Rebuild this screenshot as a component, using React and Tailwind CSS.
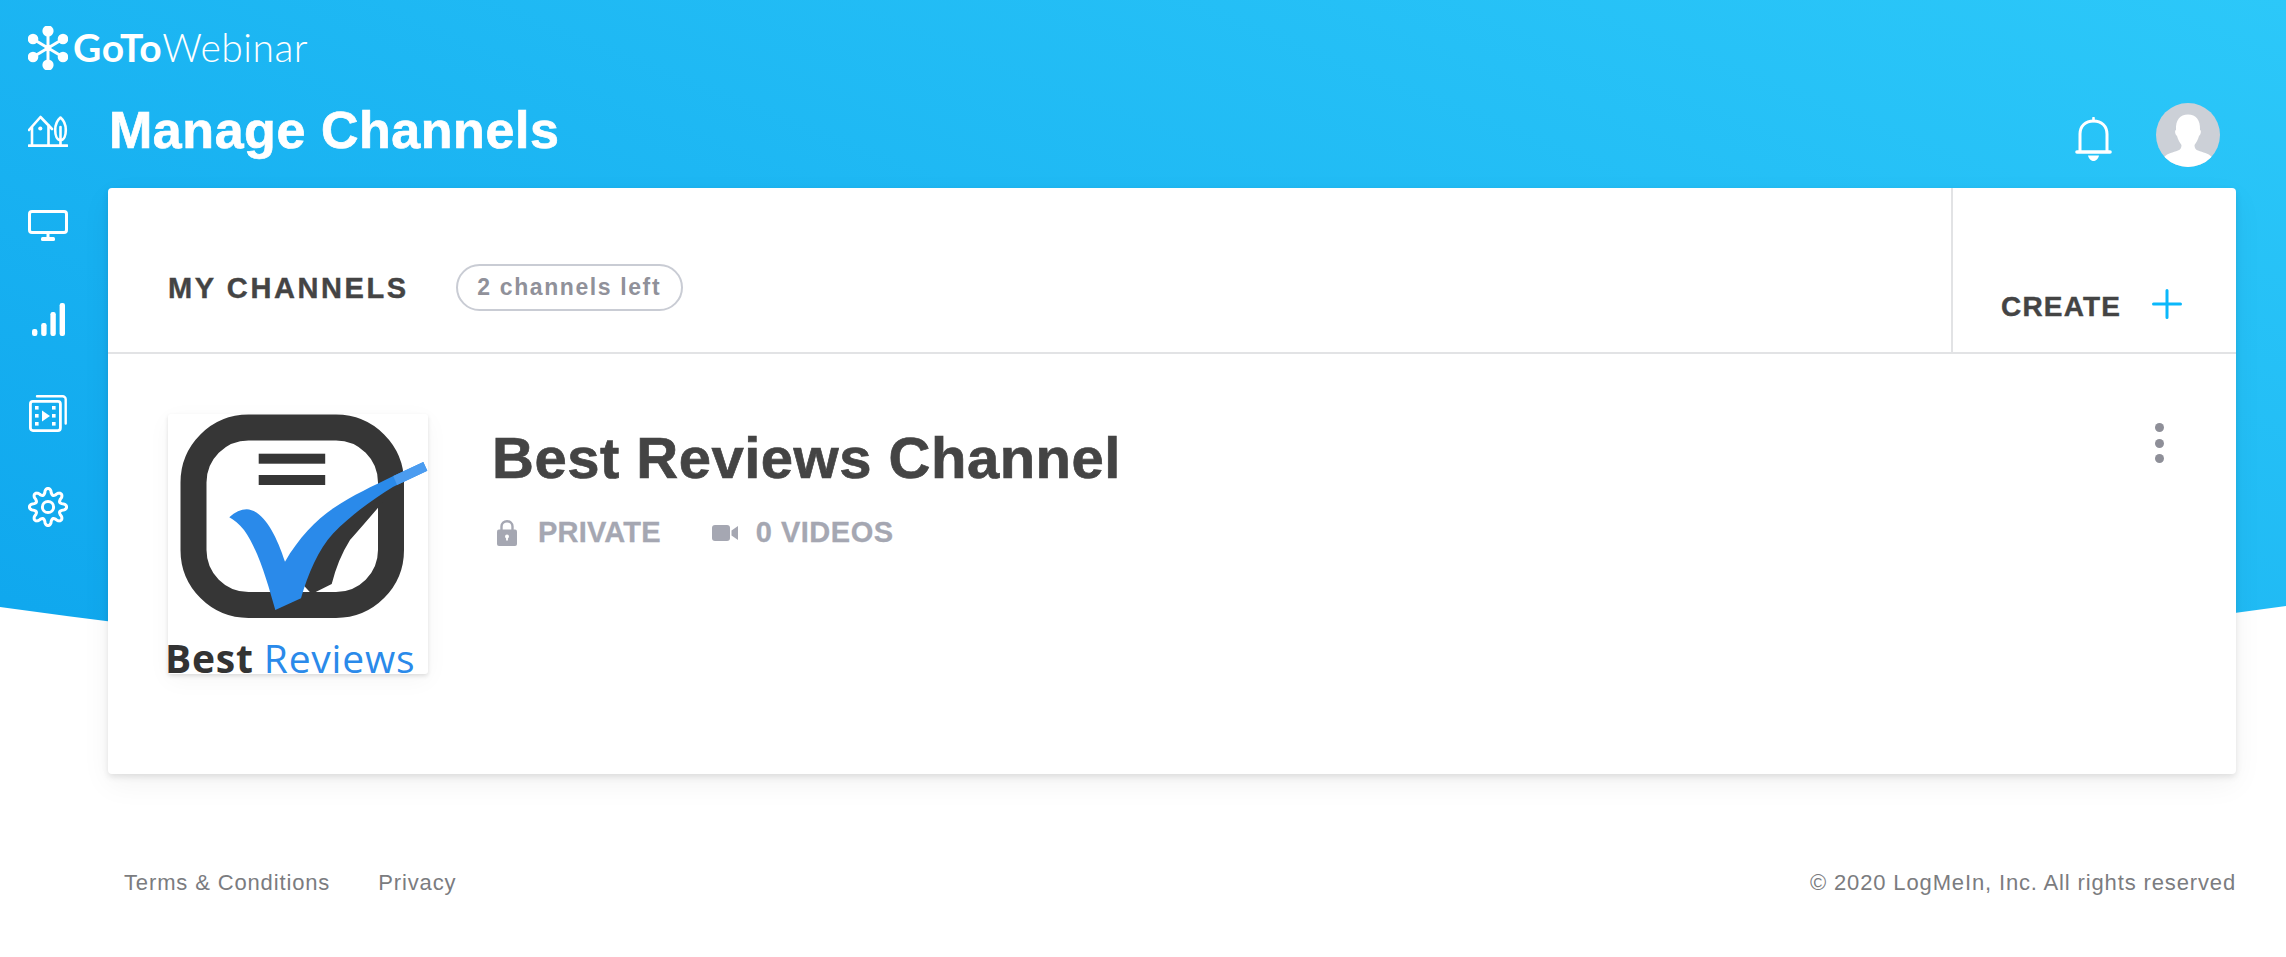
import React from "react";

function Background() {
  return (
    <svg className="absolute left-0 top-0" width="2286" height="957" viewBox="0 0 2286 957">
      <defs>
        <linearGradient id="bg" gradientUnits="userSpaceOnUse" x1="0" y1="600" x2="511" y2="-700">
          <stop offset="0" stopColor="#10a8ee" />
          <stop offset="1" stopColor="#2cc8f9" />
        </linearGradient>
      </defs>
      <path d="M0 0H2286V606Q1143 766 0 607Z" fill="url(#bg)" />
    </svg>
  );
}

function Flower() {
  const nodes = [[0, -17], [0, 17], [-15, -9], [15, -9], [-15, 9], [15, 9]];
  return (
    <svg width="40" height="44" viewBox="-20 -22 40 44" className="shrink-0">
      {nodes.map(([x, y], i) => (
        <g key={i}>
          <line x1="0" y1="0" x2={x} y2={y} stroke="#fff" strokeWidth="3" />
          <circle cx={x} cy={y} r={i < 2 ? 5.6 : 5.3} fill="#fff" />
        </g>
      ))}
      <circle cx="0" cy="0" r="3.2" fill="#fff" />
    </svg>
  );
}

function HomeIcon() {
  return (
    <svg width="40" height="32" viewBox="0 0 40 32" fill="none" stroke="#fff" strokeWidth="2.6" strokeLinecap="round" strokeLinejoin="round">
      <path d="M1 15 12.5 2 24 14" />
      <path d="M4 12.5V30.5M20.5 10.5V30.5" />
      <path d="M1 30.6H39" strokeWidth="2.8" />
      <circle cx="12.3" cy="13.5" r="2.1" fill="#fff" stroke="none" />
      <path d="M32.5 2.5C29 5.5 27.2 10 27.2 15C27.2 20.5 29 25 32.5 25C36 25 37.8 20.5 37.8 15C37.8 10 36 5.5 32.5 2.5Z" />
      <path d="M32.5 12V30.5" />
    </svg>
  );
}

function MonitorIcon() {
  return (
    <svg width="40" height="31" viewBox="0 0 40 31" fill="none">
      <rect x="1.5" y="1.5" width="37" height="21" rx="2.5" stroke="#fff" strokeWidth="3" />
      <path d="M18.5 23H21.5V27H18.5Z" fill="#fff" />
      <rect x="13" y="27" width="14" height="4" rx="1.5" fill="#fff" />
    </svg>
  );
}

function BarsIcon() {
  return (
    <svg width="33" height="33" viewBox="0 0 33 33" fill="#fff">
      <rect x="0" y="26" width="5.4" height="7" rx="2.2" />
      <rect x="9.2" y="20" width="5.4" height="13" rx="2.2" />
      <rect x="18.4" y="9" width="5.4" height="24" rx="2.2" />
      <rect x="27.6" y="0" width="5.4" height="33" rx="2.2" />
    </svg>
  );
}

function FilmIcon() {
  return (
    <svg width="38" height="37" viewBox="0 0 38 37" fill="none">
      <rect x="1.4" y="6.4" width="30" height="29.2" rx="2.5" stroke="#fff" strokeWidth="2.8" />
      <path d="M8 1.3H33.5A3 3 0 0 1 36.7 4.2V28.5" stroke="#fff" strokeWidth="2.4" strokeLinecap="round" />
      <g fill="#fff">
        <rect x="6" y="11" width="3.6" height="3.6" />
        <rect x="6" y="19" width="3.6" height="3.6" />
        <rect x="6" y="27" width="3.6" height="3.6" />
        <rect x="23" y="11" width="3.6" height="3.6" />
        <rect x="23" y="19" width="3.6" height="3.6" />
        <rect x="23" y="27" width="3.6" height="3.6" />
        <path d="M13 15.5 21 21 13 26.5Z" />
      </g>
    </svg>
  );
}

function gearPath() {
  const pts = [];
  for (let i = 0; i < 240; i++) {
    const t = (i / 240) * Math.PI * 2;
    const c = Math.cos(8 * t);
    const s = Math.sign(c) * Math.pow(Math.abs(c), 0.7);
    const r = 15.6 + 3 * s;
    pts.push(`${(20 + r * Math.sin(t)).toFixed(2)} ${(20 - r * Math.cos(t)).toFixed(2)}`);
  }
  return "M" + pts.join("L") + "Z";
}

function GearIcon() {
  return (
    <svg width="40" height="40" viewBox="0 0 40 40" fill="none" stroke="#fff" strokeWidth="3" strokeLinejoin="round">
      <path d={gearPath()} />
      <circle cx="20" cy="20" r="5.6" />
    </svg>
  );
}

function BellIcon() {
  return (
    <svg width="37" height="44" viewBox="0 0 37 44" fill="none" stroke="#fff" strokeLinecap="round" className="mt-[14px]">
      <path d="M5 34V17C5 9 10.5 4 18.5 4C26.5 4 32 9 32 17V34" strokeWidth="3" />
      <path d="M2 35H35" strokeWidth="3.6" />
      <path d="M18.5 1V4" strokeWidth="2.6" />
      <path d="M13 38.5H24C23 42.5 20.5 44 18.5 44C16.5 44 14 42.5 13 38.5Z" fill="#fff" stroke="none" />
    </svg>
  );
}

function Avatar() {
  return (
    <svg width="64" height="64" viewBox="0 0 64 64" className="rounded-full shrink-0">
      <rect width="64" height="64" fill="#ccd0d7" />
      <path d="M20 27C19.5 17 24 11.5 32 11.5C40 11.5 44.5 17 44 27C45.5 27 45 31.5 43 33C42 37 40 40 38.5 42C38.5 45 39.5 46.5 42 47.5C47 49.5 52 50 56 54V64H8V54C12 50 17 49.5 22 47.5C24.5 46.5 25.5 45 25.5 42C24 40 22 37 21 33C19 31.5 18.5 27 20 27Z" fill="#fff" />
    </svg>
  );
}

function LockIcon() {
  return (
    <svg width="20" height="26" viewBox="0 0 20 26">
      <path d="M4.5 10V6.5C4.5 3.2 7 1.2 10 1.2C13 1.2 15.5 3.2 15.5 6.5V10" fill="none" stroke="#a5a7b2" strokeWidth="2.4" />
      <rect x="0" y="9.5" width="20" height="16.5" rx="2" fill="#a5a7b2" />
      <circle cx="10" cy="16.5" r="2" fill="#fff" />
      <rect x="9.1" y="16.5" width="1.8" height="4" fill="#fff" />
    </svg>
  );
}

function CameraIcon() {
  return (
    <svg width="26" height="16" viewBox="0 0 26 16" fill="#a5a7b2" className="block">
      <rect x="0" y="0" width="18" height="16" rx="3" />
      <path d="M19.5 5.5 26 1V15L19.5 10.5Z" />
    </svg>
  );
}

function Thumbnail() {
  return (
    <div className="flex h-[260px] w-[260px] shrink-0 flex-col rounded-[3px] bg-white shadow-[0_2px_4px_rgba(0,0,0,0.12),0_6px_24px_rgba(0,0,0,0.04)]">
      <svg width="260" height="205" viewBox="0 0 260 205" className="block shrink-0">
        <rect x="25.5" y="13.5" width="197.5" height="177.5" rx="55" fill="none" stroke="#363636" strokeWidth="26" />
        <rect x="90.7" y="39.7" width="66.5" height="10" fill="#363636" />
        <rect x="90.7" y="61" width="66.5" height="10" fill="#363636" />
        <path d="M237 62 Q205 100 182 126 Q170 145 163.7 170 L143.7 180 L125 160 L180 90 Z" fill="#363636" />
        <path d="M61.3 103.3 C67 98 73 95.3 78.7 95.3 C95 96 108 120 117 147.7 C130 125 148 106 165.3 94.3 C185 81 205 72 225.3 62 L255.3 48 L259.3 56.7 L225.3 72.7 C205 85 183 101 165.3 119.3 C150 136 140 160 133 184.3 L107.3 196 C100 170 90 135 76 116 C71 110 66 106 61.3 103.3 Z" fill="#2a8aea" />
        <path d="M225.3 62 L255.3 48 L259.3 56.7 L229 71 Z" fill="#4b9cf0" />
      </svg>
      <div className="ml-[-3px] mt-[22.5px] flex font-['Open_Sans',sans-serif] text-[39px] leading-[32px] tracking-[0.8px]">
        <span className="font-bold text-[#333333]">Best</span>
        <span className="ml-[10px] text-[#2a8aea]">Reviews</span>
      </div>
    </div>
  );
}

function NavSlot({ children }) {
  return <div className="flex h-[94px] items-center justify-center">{children}</div>;
}

export default function App() {
  return (
    <div className="relative h-[957px] w-full overflow-hidden bg-white font-['Liberation_Sans',Arial,sans-serif]">
      <Background />
      <div className="relative flex flex-col">
        <div className="flex h-[84px] items-start pl-[28px] pt-[26px] text-white">
          <Flower />
          <div className="ml-[5px] mt-[-1px] flex items-baseline font-['Lato',sans-serif] text-[39px] leading-[44px]">
            <span className="font-bold tracking-[0.6px]">GoTo</span>
            <span className="font-light tracking-[0.5px]">Webinar</span>
          </div>
        </div>
        <div className="flex">
          <nav className="w-[108px] shrink-0 pl-[8px] pr-[20px]">
            <NavSlot><HomeIcon /></NavSlot>
            <NavSlot><MonitorIcon /></NavSlot>
            <NavSlot><BarsIcon /></NavSlot>
            <NavSlot><FilmIcon /></NavSlot>
            <NavSlot><GearIcon /></NavSlot>
          </nav>
          <main className="w-[2128px] shrink-0">
            <div className="flex h-[104px] items-start justify-between pr-[16px]">
              <h1 className="ml-[1px] mt-[16px] text-[52px] font-bold leading-[60px] tracking-[0.55px] text-white [-webkit-text-stroke:0.7px_#fff]">Manage Channels</h1>
              <div className="mt-[19px] flex items-start gap-[44px]">
                <BellIcon />
                <Avatar />
              </div>
            </div>
            <section className="h-[586px] rounded-[4px] bg-white shadow-[0_3px_6px_rgba(0,0,0,0.1),0_10px_30px_rgba(0,0,0,0.05)]">
              <header className="flex h-[166px] border-b-2 border-[#e2e3e5]">
                <div className="flex flex-1 items-center pl-[60px] pt-[35px]">
                  <h2 className="text-[29px] font-bold leading-[34px] tracking-[2.6px] text-[#444444] [-webkit-text-stroke:0.4px_#444444]">MY CHANNELS</h2>
                  <span className="ml-[47px] flex h-[47px] w-[227px] items-center justify-center rounded-full border-2 border-[#c9ccd4] text-[23px] font-bold tracking-[1.6px] text-[#90919a]">2 channels left</span>
                </div>
                <div className="flex w-[285px] items-center border-l-2 border-[#e2e3e5] pl-[48px] pt-[73px]">
                  <span className="text-[28px] font-bold leading-[34px] tracking-[1.2px] text-[#444444] [-webkit-text-stroke:0.4px_#444444]">CREATE</span>
                  <svg className="ml-[31px] mt-[-6px]" width="30" height="30" viewBox="0 0 30 30" stroke="#0ab8fb" strokeWidth="3" strokeLinecap="round">
                    <path d="M15 1.5V28.5M1.5 15H28.5" />
                  </svg>
                </div>
              </header>
              <div className="flex items-start pl-[60px] pr-[72px] pt-[60px]">
                <Thumbnail />
                <div className="ml-[64px] mt-[15px]">
                  <h3 className="text-[58px] font-bold leading-[58px] tracking-[0.5px] text-[#444444] [-webkit-text-stroke:0.7px_#444444]">Best Reviews Channel</h3>
                  <div className="mt-[30px] flex h-[32px] items-center pl-[5px] text-[29px] font-bold text-[#a5a7b2] [-webkit-text-stroke:0.3px_#a5a7b2]">
                    <LockIcon />
                    <span className="ml-[21px] tracking-[0.2px]">PRIVATE</span>
                    <span className="ml-[51px]"><CameraIcon /></span>
                    <span className="ml-[18px] tracking-[0.5px]">0 VIDEOS</span>
                  </div>
                </div>
                <div className="ml-auto mt-[9px] flex flex-col gap-[6.5px]">
                  <span className="h-[9px] w-[9px] rounded-full bg-[#8e8f98]" />
                  <span className="h-[9px] w-[9px] rounded-full bg-[#8e8f98]" />
                  <span className="h-[9px] w-[9px] rounded-full bg-[#8e8f98]" />
                </div>
              </div>
            </section>
            <footer className="mt-[94px] flex justify-between pl-[16px] text-[22px] leading-[30px] tracking-[0.86px] text-[#7b7c80]">
              <div className="flex gap-[48px]">
                <span>Terms &amp; Conditions</span>
                <span>Privacy</span>
              </div>
              <span>© 2020 LogMeIn, Inc. All rights reserved</span>
            </footer>
          </main>
        </div>
      </div>
    </div>
  );
}
